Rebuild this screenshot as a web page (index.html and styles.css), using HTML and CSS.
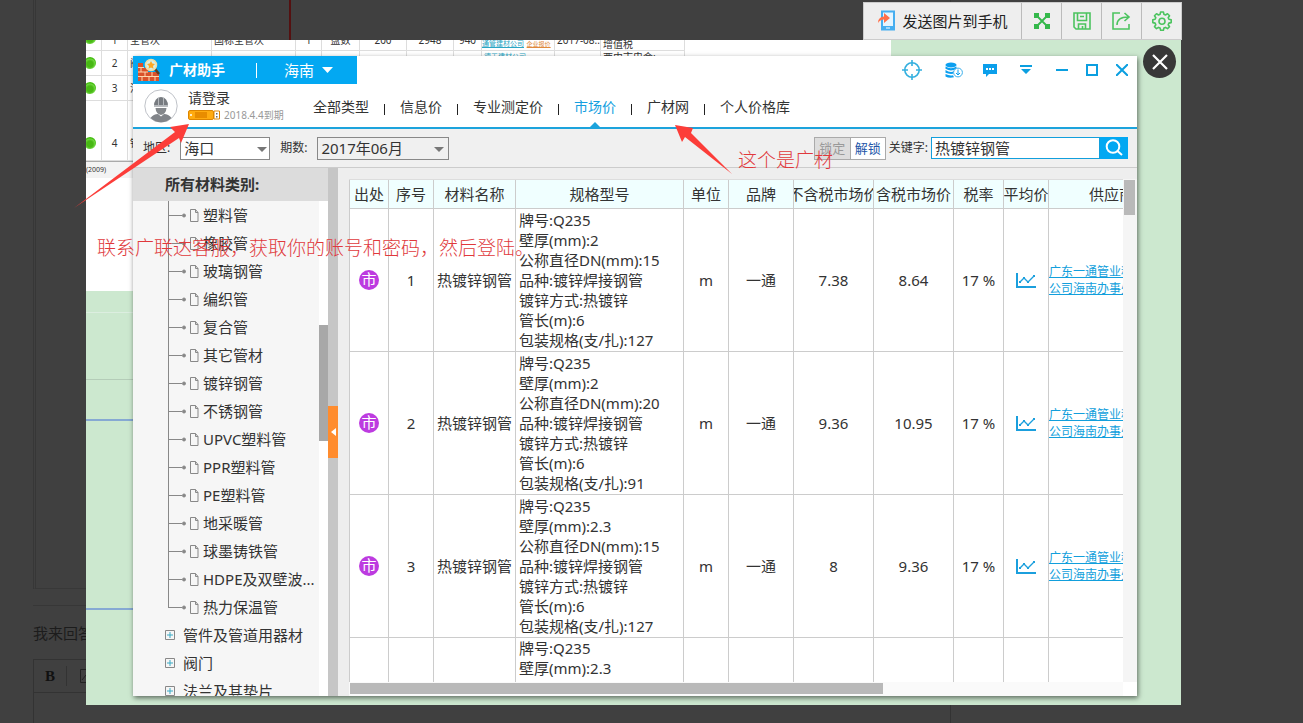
FILE: index.html
```
<!DOCTYPE html>
<html lang="zh-CN">
<head>
<meta charset="utf-8">
<title>广材助手</title>
<link rel="stylesheet" href="styles.css">
</head>
<body>
<main class="qa">
  <section class="qa-content"></section>
  <section class="qa-answer">
    <h2 class="qa-title">我来回答</h2>
    <div class="editor">
      <div class="editor-bar">
        <button class="editor-bold" type="button">B</button>
        <button class="editor-image" type="button" aria-label="图片"><svg width="16" height="16" viewBox="0 0 16 16" fill="none" stroke="#222"><path d="M.5 1.500h15v13H.5zM2 12l4-5 3 3 2-2 4 4"/></svg></button>
      </div>
    </div>
  </section>
</main>

<div class="lightbox">
  <div class="sheet">
    <table class="sheet-table">
      <colgroup><col class="s16"><col class="s26"><col class="s84"><col class="s84"><col class="s26"><col class="s38"><col class="s47"><col class="s47"><col class="s28"><col class="s73"><col class="s46"><col class="s84"></colgroup>
      <tr class="sr-first"><td class="dot-cell"><i class="dot"></i></td><td>1</td><td class="left">全管次</td><td class="left">国标全管次</td><td>1</td><td>盘数</td><td>200</td><td>2948</td><td>940</td><td class="left links"><span class="sup">通管建材公司</span> <span class="offer">企业报价</span></td><td class="left">2017-08...</td><td class="left tax">增值税</td></tr>
      <tr class="sr"><td class="dot-cell"><i class="dot"></i></td><td>2</td><td class="left">阀门</td><td></td><td></td><td></td><td></td><td></td><td></td><td class="left"><span class="sup up">德玉建材公司</span></td><td></td><td class="left top">西由市电会:</td></tr>
      <tr class="sr"><td class="dot-cell"><i class="dot"></i></td><td>3</td><td class="left">法兰</td><td></td><td></td><td></td><td></td><td></td><td></td><td></td><td></td><td></td></tr>
      <tr class="sr-tall"><td class="dot-cell"><i class="dot"></i></td><td>4</td><td class="left">钢管</td><td></td><td></td><td></td><td></td><td></td><td></td><td></td><td></td><td></td></tr>
    </table>
    <p class="sheet-note">(2009)</p>
  </div>
  <div class="rules"><i class="rule pale"></i><i class="rule gray"></i><i class="rule blue"></i><i class="rule blue far"></i></div>

  <div class="app">
    <header class="app-top">
      <div class="brand">
        <svg class="brand-logo" width="24" height="24" viewBox="0 0 24 24"><path d="M1 5h5v5h5v4h11v9H1z" fill="#d9522b"/><path d="M1 9.500h6M1 14h10M1 18.500h21M4 10v4M8 14v4M15 14v4M5 19v4M12 19v4M18 19v4" stroke="#ffd7ae"/><path d="M18 11l4 5" stroke="#584026" stroke-width="2.500"/><circle cx="14" cy="7" r="5.500" fill="#d7f0e9" stroke="#f4dfa1" stroke-width="1.500"/><path d="M14 3l1.300 2.500 2.700.5-2 2 .5 2.800-2.500-1.300-2.500 1.300.5-2.800-2-2 2.700-.5z" fill="#ffa822"/></svg>
        <h1 class="brand-name">广材助手</h1>
        <span class="brand-line"></span>
        <button class="province" type="button">海南 <svg width="11" height="6" viewBox="0 0 11 6"><path d="M0 0h11L5.500 6z" fill="#fff"/></svg></button>
      </div>
      <div class="wins">
        <button class="win aim" type="button" aria-label="定位"><svg width="20" height="20" viewBox="0 0 20 20" fill="none" stroke="#35b0df" stroke-width="1.600"><circle cx="10" cy="10" r="7.200"/><path d="M10 0v6M10 14v6M0 10h6M14 10h6"/></svg></button>
        <button class="win" type="button" aria-label="数据"><svg width="18" height="16" viewBox="0 0 18 16"><g fill="#0b9ff0"><ellipse cx="6" cy="3" rx="5.500" ry="2.500"/><path d="M.5 4.500Q6 8 11.500 4.500v2.300Q6 10 .5 6.800zM.5 8Q5 11 9 9.300l-1 2.500Q4 12.300.5 10.800zM.5 12Q4 14 8 13.300l1 2Q4 16.500.5 14.500z"/></g><circle cx="13" cy="10.500" r="4.400" fill="#fff" stroke="#3aaeea"/><path d="M13 7.500v5M11 11l2 2 2-2" fill="none" stroke="#0b9ff0"/></svg></button>
        <button class="win" type="button" aria-label="消息"><svg width="14" height="13" viewBox="0 0 14 13"><path d="M0 0h14v10H6l-3 3v-3H0z" fill="#0b9feb"/><path d="M3 4h2v2H3zM6 4h2v2H6zM9 4h2v2H9z" fill="#fff"/></svg></button>
        <button class="win" type="button" aria-label="菜单"><svg width="12" height="10" viewBox="0 0 12 10" fill="#0b9fe0"><path d="M0 0h12v2H0zM1 4h10l-5 5z"/></svg></button>
        <button class="win" type="button" aria-label="最小化"><svg width="12" height="12" viewBox="0 0 12 12"><path d="M0 6h12" stroke="#0b9fe0" stroke-width="2"/></svg></button>
        <button class="win" type="button" aria-label="最大化"><svg width="12" height="12" viewBox="0 0 12 12"><path d="M1 1h10v10H1z" fill="none" stroke="#0b9fe0" stroke-width="2"/></svg></button>
        <button class="win" type="button" aria-label="关闭"><svg width="12" height="12" viewBox="0 0 12 12"><path d="M0 0l12 12M12 0L0 12" stroke="#0b9fe0" stroke-width="2"/></svg></button>
      </div>
    </header>

    <div class="user-row">
      <svg class="avatar" width="34" height="34" viewBox="0 0 34 34"><circle cx="17" cy="17" r="16.200" fill="#fff" stroke="#bfc2c8"/><path d="M10 17.500q0-9 7-9.500 7 .5 7 9.500z" fill="#777b80"/><path d="M10 16.500h14M14.500 9v7M19.500 9v7" stroke="#b5b8bc"/><path d="M11.500 19h11q-.5 6-5.500 7-5-1-5.500-7z" fill="#84878b"/><path d="M6.500 29q3-4 7.500-4l3 2.500 3-2.500q4.500 0 7.500 4-4.500 4.200-10.500 4.200T6.500 29z" fill="#818489"/></svg>
      <div class="user">
        <a class="login" href="#">请登录</a>
        <div class="expiry"><svg width="32" height="10" viewBox="0 0 32 10"><rect x=".5" y=".5" width="25" height="9" rx="1.500" fill="#ffab10" stroke="#dd8500"/><path d="M7 2h12v6H7z" fill="#e88c00"/><circle cx="3" cy="5" r="1" fill="#fff"/><path d="M26 1h5.500v8H26z" fill="#fff" stroke="#dd8500"/><path d="M28 3h1.500v1.500H28zM28 6h1.500v1.500H28z" fill="#666"/></svg><span>2018.4.4到期</span></div>
      </div>
      <nav class="nav">
        <a href="#">全部类型</a><a href="#">信息价</a><a href="#">专业测定价</a><a href="#" class="on">市场价</a><a href="#">广材网</a><a href="#">个人价格库</a>
      </nav>
    </div>

    <form class="filters">
      <label for="area">地区:</label>
      <div class="pick pick-area"><select id="area"><option>海口</option></select><svg width="10" height="5" viewBox="0 0 10 5"><path d="M0 0h10L5 5z" fill="#777"/></svg></div>
      <label for="issue">期数:</label>
      <div class="pick pick-issue"><select id="issue"><option>2017年06月</option></select><svg width="10" height="5" viewBox="0 0 10 5"><path d="M0 0h10L5 5z" fill="#777"/></svg></div>
      <div class="locks"><button class="lock off" type="button">锁定</button><button class="lock" type="button">解锁</button></div>
      <label class="key-label" for="key">关键字:</label>
      <div class="search"><input id="key" type="text" value="热镀锌钢管"><button type="button" aria-label="搜索"><svg width="18" height="18" viewBox="0 0 18 18" fill="none" stroke="#fff" stroke-width="2"><circle cx="8" cy="7.500" r="6.300"/><path d="M12.500 12l4.500 4"/></svg></button></div>
    </form>

    <div class="work">
      <aside class="side">
        <h2 class="side-title">所有材料类别:</h2>
        <div class="side-body">
          <div class="tree">
            <ul class="leaves" id="leaves">
              <li>塑料管</li><li>橡胶管</li><li>玻璃钢管</li><li>编织管</li><li>复合管</li><li>其它管材</li><li>镀锌钢管</li><li>不锈钢管</li><li>UPVC塑料管</li><li>PPR塑料管</li><li>PE塑料管</li><li>地采暖管</li><li>球墨铸铁管</li><li>HDPE及双壁波...</li><li>热力保温管</li>
            </ul>
            <ul class="groups"><li>管件及管道用器材</li><li>阀门</li><li>法兰及其垫片</li></ul>
          </div>
          <div class="side-scroll"><i class="side-thumb"></i></div>
        </div>
      </aside>
      <div class="splitter"><button type="button" aria-label="收起"><svg width="5" height="8" viewBox="0 0 5 8"><path d="M5 0v8L0 4z" fill="#fff"/></svg></button></div>
      <section class="list">
        <div class="view">
          <table class="prices">
            <colgroup><col class="w40"><col class="w45"><col class="w82"><col class="w168"><col class="w45"><col class="w65"><col class="w80"><col class="w80"><col class="w50"><col class="w45"><col class="w126"></colgroup>
            <thead><tr><th><div>出处</div></th><th><div>序号</div></th><th><div>材料名称</div></th><th><div>规格型号</div></th><th><div>单位</div></th><th><div>品牌</div></th><th><div>不含税市场价</div></th><th><div>含税市场价</div></th><th><div>税率</div></th><th><div>平均价</div></th><th><div>供应商</div></th></tr></thead>
            <tbody id="rows"></tbody>
          </table>
        </div>
        <div class="vbar"><i></i></div>
        <div class="hbar"><i></i></div>
        <div class="corner"></div>
      </section>
    </div>
  </div>

  <svg class="arrow arrow-login" width="116" height="86" viewBox="0 0 116 86"><path d="M115 0L96 3l5 5L0 84l105-70 2 5z" fill="#fc3d39"/></svg>
  <svg class="arrow arrow-nav" width="58" height="50" viewBox="0 0 58 50"><path d="M0 0l18 3-2 5 41 41L10 12l-3 5z" fill="#fc3d39"/></svg>
  <p class="note note-login">联系广联达客服，获取你的账号和密码，然后登陆。</p>
  <p class="note note-nav">这个是广材</p>
</div>

<div class="viewer-bar">
  <button class="send" type="button"><svg width="20" height="22" viewBox="0 0 20 22"><rect x="5" y="1.500" width="12" height="18" fill="#e4f5ff" stroke="#45aef0" stroke-width="2"/><path d="M4 16h14v4H4z" fill="#45aef0"/><path d="M9 18h4" stroke="#fff"/><path d="M1 13q0-6 6-6.500V3l6 5-6 5V9.500Q3 9.500 1 13z" fill="#ff704a"/></svg>发送图片到手机</button>
  <button type="button" aria-label="原图"><svg width="16" height="16" viewBox="0 0 16 16" fill="#35b84b"><path d="M0 0h5v5H0zM11 0h5v5h-5zM0 11h5v5H0zM11 11h5v5h-5z"/><path d="M3 3l10 10M13 3L3 13" stroke="#35b84b" stroke-width="1.800"/></svg></button>
  <button type="button" aria-label="保存"><svg width="18" height="18" viewBox="0 0 18 18" fill="none" stroke="#4cc45f" stroke-width="1.600"><path d="M1 1h16v16H3l-2-2zM4.500 1v7.500h9V1M5.500 17v-5h7v5M7 4.500h4M9.500 14v3"/></svg></button>
  <button type="button" aria-label="分享"><svg width="19" height="18" viewBox="0 0 19 18" fill="none" stroke="#4cc45f" stroke-width="1.600"><path d="M8 1H1v16h16v-5M5 13q0-8 11-8M12.500 1L17 5l-4.500 4"/></svg></button>
  <button type="button" aria-label="设置"><svg width="20" height="20" viewBox="0 0 20 20" fill="none" stroke="#4cc45f" stroke-width="1.600" stroke-linejoin="round"><path d="M8.600 1h2.800l.5 2.300 1.600.7 2-1.300 2 2-1.300 2 .7 1.600 2.300.5v2.800l-2.300.5-.7 1.600 1.300 2-2 2-2-1.300-1.600.7-.5 2.100H8.600l-.5-2.100-1.600-.7-2 1.300-2-2 1.300-2-.7-1.600-2.300-.5V8.800l2.300-.5.7-1.600-1.300-2 2-2 2 1.300 1.600-.7z"/><circle cx="10" cy="10.200" r="3"/></svg></button>
</div>
<button class="close" type="button" aria-label="关闭"><svg width="16" height="16" viewBox="0 0 16 16"><path d="M1 1l14 14M15 1L1 15" stroke="#fff" stroke-width="2.200"/></svg></button>
<script src="app.js"></script>
</body>
</html>
```

FILE: styles.css
```
* { box-sizing: border-box; }
body { margin: 0; min-height: 100vh; position: relative; overflow: hidden; background: #404040; color: #333; font: 15px/20px "Noto Sans", "Noto Sans CJK SC", sans-serif; }
button, input, select { font: inherit; color: inherit; margin: 0; padding: 0; border: 0; background: none; border-radius: 0; }
h1, h2, p, ul { margin: 0; padding: 0; font-weight: normal; }
ul { list-style: none; }
a { color: inherit; text-decoration: none; }
svg { display: block; flex: none; }

/* page under the viewer */
.qa { height: 100vh; margin: 0 352px 0 33px; display: flex; flex-direction: column; }
.qa-content { height: 589px; flex: none; border: 1px solid #383838; border-top: 0; border-left: 3px double #373737; background: linear-gradient(#541010, #541010) 253px 0 / 2px 100% no-repeat; }
.qa-answer { flex: 1; margin-top: 16px; border-top: 1px solid #373737; display: flex; flex-direction: column; }
.qa-title { font-size: 15px; line-height: 20px; margin: 17px 0 16px; color: #1c1c1c; }
.editor { flex: 1; border: 1px solid #333; border-bottom: 0; }
.editor-bar { height: 33px; display: flex; align-items: center; border-bottom: 1px solid #333; }
.editor-bold { width: 33px; height: 20px; border-right: 1px solid #333; font: bold 15px/20px "Liberation Serif", serif; color: #111; }
.editor-image { margin-left: 13px; }

/* opened picture */
.lightbox { position: absolute; top: 40px; right: 122px; bottom: 18px; left: 86px; overflow: visible; background: #cce8cf; }
.sheet { width: 805px; height: 251px; background: #fff; overflow: hidden; }
.sheet-table { width: 599px; table-layout: fixed; border-collapse: separate; border-spacing: 0; font-size: 10px; line-height: 12px; }
.sheet-table td { padding: 0 2px; border-right: 1px solid #ddd; border-bottom: 1px solid #ddd; text-align: center; white-space: nowrap; overflow: hidden; }
.sheet-table .left { text-align: left; }
.sheet-table .dot-cell { padding: 0; }
.s16 { width: 16px; } .s26 { width: 26px; } .s28 { width: 28px; } .s38 { width: 38px; } .s46 { width: 46px; } .s47 { width: 47px; } .s73 { width: 73px; } .s84 { width: 84px; }
.sheet-table .sr-first td { height: 11px; line-height: 0; vertical-align: top; }
.sheet-table .sr-first .tax { line-height: 8px; }
.sheet-table .sr-first .links { line-height: 4px; padding: 0; }
.sr td { height: 25px; }
.sr td.top { vertical-align: top; }
.sheet-table .sr-tall td { height: 60px; padding-top: 24px; }
.sup { font-size: 7px; color: #2aa6c4; text-decoration: underline; }
.up { display: block; height: 22px; line-height: 10px; }
.offer { font-size: 6px; color: #e08a3c; text-decoration: underline; }
.dot { display: block; width: 12px; height: 12px; margin-left: -2px; border-radius: 50%; background: radial-gradient(circle at 6px 7px, #48b814 3px, #6ed63f 5px, #43bd0d 6px); }
.sr-first .dot { margin-top: -8px; }
.sheet-note { font-size: 7px; line-height: 16px; border-top: 1px solid #aaa; background: #f3f3f3; width: 47px; }
.rules { display: flex; flex-direction: column; width: 47px; }
.rule { height: 1px; }
.rule.pale { margin-top: 21px; background: #dceee0; }
.rule.gray { margin-top: 66px; background: #b4ccb8; }
.rule.blue { height: 2px; margin-top: 39px; background: #86a9d3; }
.rule.far { margin-top: 187px; }

/* application window */
.app { position: absolute; top: 16px; right: 44px; bottom: 9px; left: 47px; display: flex; flex-direction: column; background: #fff; box-shadow: 1px 2px 5px rgba(0,0,0,.55); overflow: hidden; }
.app-top { display: flex; justify-content: space-between; height: 28px; flex: none; }
.brand { width: 224px; display: flex; align-items: center; padding-left: 4px; background: #03a8f2; color: #fff; }
.brand-name { font-size: 14px; font-weight: bold; line-height: 20px; margin-left: 8px; }
.brand-line { width: 1px; height: 15px; background: #fff; margin: 0 27px 0 31px; }
.province { display: flex; align-items: center; gap: 8px; }
.wins { display: flex; align-items: center; }
.win { width: 30px; height: 28px; display: flex; align-items: center; justify-content: center; margin-right: 6px; }
.win.aim { margin-right: 12px; }
.win:nth-last-child(-n+3) { margin-right: 0; }
.user-row { display: flex; align-items: center; height: 45px; flex: none; border-bottom: 2px solid #1ca3dc; padding-left: 11px; }
.user { width: 114px; margin-left: 10px; }
.login { display: block; font-size: 14px; line-height: 18px; }
.expiry { display: flex; align-items: center; gap: 4px; font-size: 10px; line-height: 16px; color: #999; white-space: nowrap; }
.nav { display: flex; align-self: stretch; align-items: flex-end; margin-left: 11px; font-size: 14px; }
.nav a { position: relative; line-height: 41px; white-space: nowrap; }
.nav a + a { margin-left: 31px; }
.nav a + a::before { content: ""; position: absolute; left: -16px; top: 18px; width: 1px; height: 11px; background: #222; }
.nav .on { color: #159fdf; }
.nav .on::after { content: ""; position: absolute; left: 50%; bottom: 0; margin-left: -5px; border: 5px solid transparent; border-top: 0; border-bottom-color: #1ca3dc; }
.filters { display: flex; align-items: center; height: 39px; flex: none; padding: 0 9px 0 10px; background: #f0f0f0; border-bottom: 1px solid #ccc; font-size: 12px; }
.filters label { white-space: nowrap; }
.pick { position: relative; height: 23px; margin: 0 10px; border: 1px solid #888; background: #fff; }
.pick select { width: 100%; height: 100%; padding-left: 3px; appearance: none; font-size: 15px; }
.pick svg { position: absolute; right: 2px; top: 9px; pointer-events: none; }
.pick-area { width: 90px; }
.pick-issue { width: 132px; background: #f0f0f0; }
.pick-issue svg { right: 4px; }
.locks { display: flex; margin-left: auto; }
.lock { width: 36px; height: 23px; border: 1px solid #aaa; background: #fff; font-size: 13px; color: #2456a8; }
.lock.off { background: #ddd; color: #999; border-right: 0; }
.key-label { margin: 0 3px; }
.search { display: flex; height: 22px; width: 197px; }
.search input { flex: 1; min-width: 0; padding: 0 3px; border: 1px solid #129fdc; background: #fff; font-size: 15px; }
.search button { width: 28px; background: #03a8f2; display: flex; align-items: center; justify-content: center; }

.work { flex: 1; min-height: 0; display: flex; background: #eee; }
.side { width: 195px; flex: none; display: flex; flex-direction: column; background: #f6f6f6; }
.side-title { height: 33px; flex: none; padding-left: 32px; font-weight: bold; font-size: 15px; line-height: 33px; background: #dcdcdc; }
.side-body { flex: 1; min-height: 0; display: flex; }
.tree { flex: 1; min-width: 0; overflow: hidden; }
.leaves li { height: 28px; line-height: 28px; margin-left: 35px; display: flex; align-items: center; white-space: nowrap; }
.leaves svg { margin-right: 3px; }
.groups li { height: 28px; line-height: 28px; padding-left: 32px; display: flex; align-items: center; gap: 8px; white-space: nowrap; }
.side-scroll { width: 9px; background: #fff; }
.side-thumb { display: block; height: 116px; margin-top: 124px; background: #a8a8a8; }
.splitter { width: 10px; flex: none; background: #c6c6c6; padding-top: 238px; }
.splitter button { width: 10px; height: 52px; background: #ff8c2e; display: flex; align-items: center; justify-content: center; }
.list { flex: 1; min-width: 0; display: grid; grid-template: minmax(0, 1fr) 14px / minmax(0, 1fr) 14px; padding: 11px 0 0 11px; }
.view { overflow: hidden; background: #fff; border-top: 1px solid #ddd; }
.prices { width: 826px; table-layout: fixed; border-collapse: separate; border-spacing: 0; color: #333; }
.w40 { width: 40px; } .w45 { width: 45px; } .w82 { width: 82px; } .w168 { width: 168px; } .w65 { width: 65px; } .w80 { width: 80px; } .w50 { width: 50px; } .w126 { width: 126px; }
.prices th, .prices td { padding: 0; border: solid #ccc; border-width: 0 1px 1px 0; text-align: center; font-weight: normal; white-space: nowrap; }
.prices th:first-child, .prices td:first-child { border-left-width: 1px; }
.prices th { background: #f0ffff; }
.prices th div { height: 28px; line-height: 28px; display: flex; justify-content: center; overflow: hidden; }
.prices td { height: 143px; }
.prices .spec { text-align: left; padding-left: 3px; }
.prices .supplier { text-align: left; font-size: 12px; line-height: 17px; }
.supplier a { color: #129fdc; text-decoration: underline; }
.prices svg { margin: 0 auto; }
.mark { display: block; width: 20px; height: 20px; margin: 0 auto; border-radius: 50%; background: #bd3be0; color: #fff; font-size: 15px; line-height: 19px; }
.vbar { background: #f5f5f5; padding: 1px 2px 0 1px; }
.vbar i { display: block; height: 35px; background: #b9b9b9; }
.hbar { background: #fafafa; padding: 1px; }
.hbar i { display: block; width: 69%; height: 11px; background: #b9b9b9; }
.corner { background: #fff; }

/* red annotations over the picture */
.arrow { position: absolute; }
.arrow-login { left: -12px; top: 84px; }
.arrow-nav { left: 589px; top: 85px; }
.note { position: absolute; color: #e0393c; font-size: 19px; line-height: 24px; font-weight: 300; white-space: nowrap; }
.note-login { left: 11px; top: 196px; }
.note-nav { left: 652px; top: 108px; }

/* viewer controls */
.viewer-bar { position: absolute; top: 2px; right: 121px; height: 38px; display: flex; background: #eee; border: 1px solid #ccc; color: #222; }
.viewer-bar button { width: 40px; display: flex; align-items: center; justify-content: center; }
.viewer-bar button + button { border-left: 1px solid #bbb; }
.viewer-bar .send { width: 157px; gap: 5px; }
.close { position: absolute; top: 45px; right: 127px; width: 33px; height: 33px; border-radius: 50%; background: #383838; display: flex; align-items: center; justify-content: center; }
```

FILE: app.js
```
const leafIcon = last => `<svg width="32" height="28" viewBox="0 0 32 28" fill="none" stroke="#888"><path d="M.5 0V${last ? 14.5 : 28}M0 14.500h14"/><circle cx="16" cy="14.500" r="1.500" fill="#888"/><path d="M22.500 8.500h5l2.500 3v9h-7.500zM27.500 8.500v3H30"/></svg>`;
const leaves = document.querySelectorAll('.leaves li');
leaves.forEach((li, i) => li.insertAdjacentHTML('afterbegin', leafIcon(i === leaves.length - 1)));
document.querySelectorAll('.groups li').forEach(li => li.insertAdjacentHTML('afterbegin',
  '<svg width="10" height="10" viewBox="0 0 10 10" fill="none"><path d="M.5.5h9v9h-9z" stroke="#888"/><path d="M5 2v6M2 5h6" stroke="#38a9c4"/></svg>'));

const items = [
  { wall: '2', dn: '15', pack: '127', net: '7.38', gross: '8.64' },
  { wall: '2', dn: '20', pack: '91', net: '9.36', gross: '10.95' },
  { wall: '2.3', dn: '15', pack: '127', net: '8', gross: '9.36' },
  { wall: '2.3' }
];
const chart = '<svg width="20" height="15" viewBox="0 0 20 15" fill="none" stroke="#1b9fdd"><path d="M1 0v14h19" stroke-width="2"/><path d="M4 9l4-4 4 4 6-6" stroke-width="1.300"/><path d="M3 8h2v2H3zM7 4h2v2H7zM11 8h2v2h-2zM17 2h2v2h-2z" fill="#1b9fdd" stroke="none"/></svg>';
document.getElementById('rows').innerHTML = items.map((r, i) => r.dn ? `<tr>
<td><span class="mark">市</span></td><td>${i + 1}</td><td>热镀锌钢管</td>
<td class="spec">牌号:Q235<br>壁厚(mm):${r.wall}<br>公称直径DN(mm):${r.dn}<br>品种:镀锌焊接钢管<br>镀锌方式:热镀锌<br>管长(m):6<br>包装规格(支/扎):${r.pack}</td>
<td>m</td><td>一通</td><td>${r.net}</td><td>${r.gross}</td><td>17 %</td><td>${chart}</td>
<td class="supplier"><a href="#">广东一通管业科技有限<br>公司海南办事处</a></td></tr>` : `<tr><td></td><td></td><td></td>
<td class="spec">牌号:Q235<br>壁厚(mm):${r.wall}<br><br><br><br><br><br>&nbsp;</td>
<td></td><td></td><td></td><td></td><td></td><td></td><td></td></tr>`).join('');
```
